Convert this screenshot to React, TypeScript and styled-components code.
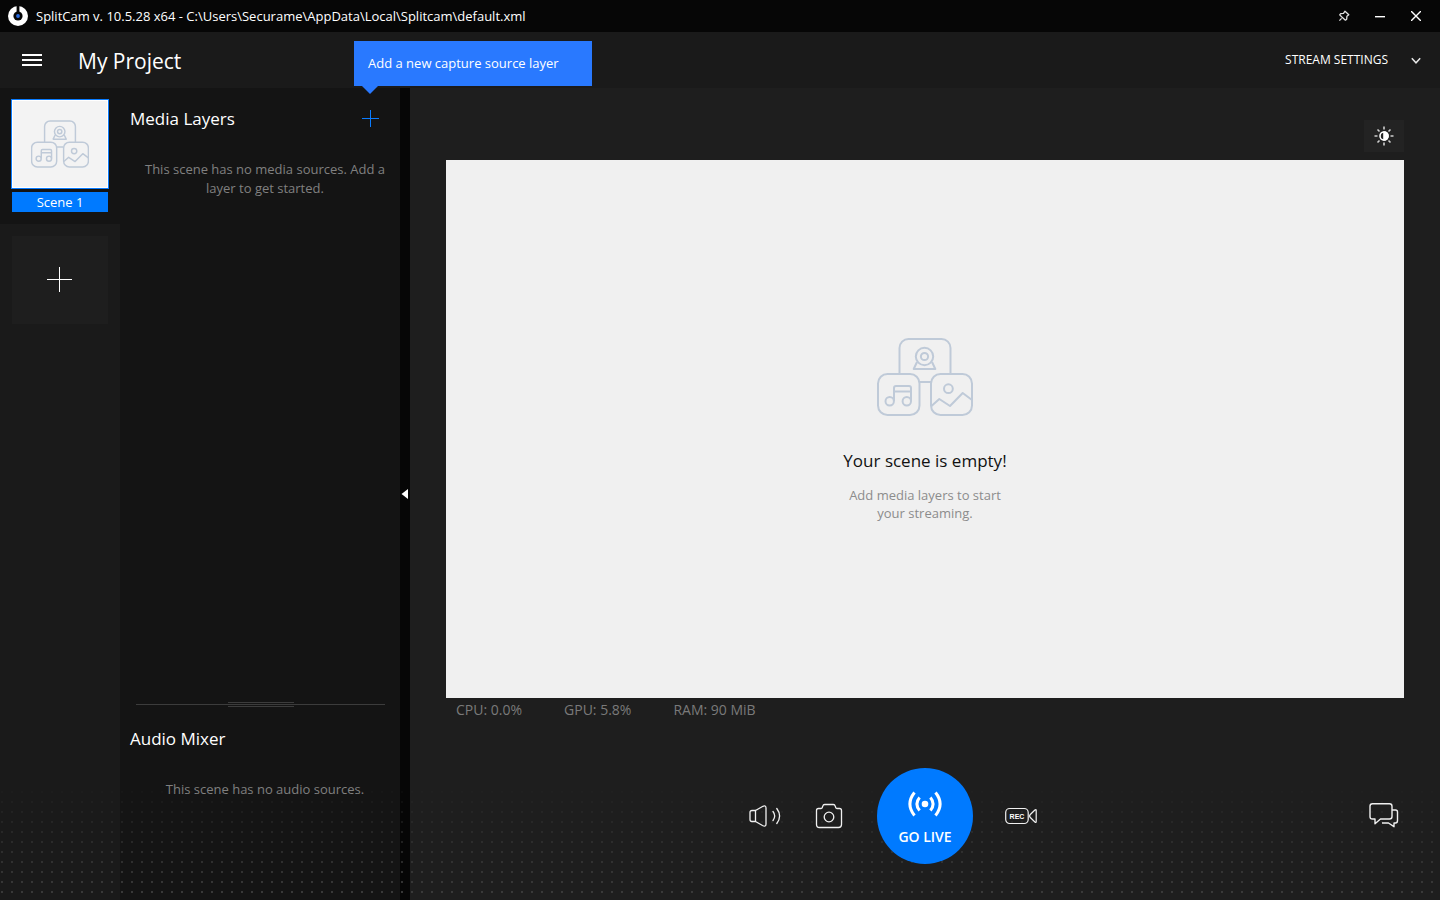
import React from "react";
import styled, { createGlobalStyle } from "styled-components";

const GlobalStyle = createGlobalStyle`
  *, *::before, *::after { box-sizing: border-box; }
  body {
    margin: 0;
    background: #1e1e1e;
    color: #ffffff;
    font-family: "Open Sans", "Noto Sans", sans-serif;
    font-size: 14px;
  }
  h1, h2, h3, p { margin: 0; font-weight: 400; }
  button {
    display: inline-flex;
    align-items: center;
    justify-content: center;
    padding: 0;
    border: 0;
    background: transparent;
    color: inherit;
    font: inherit;
    cursor: pointer;
  }
  svg { display: block; flex: none; }
`;

const Window = styled.div`
  position: relative;
  display: flex;
  flex-direction: column;
  min-height: 100vh;
`;

const DotField = styled.div`
  position: absolute;
  z-index: 1;
  left: 0;
  right: 0;
  bottom: 0;
  height: 120px;
  pointer-events: none;
  background-image: radial-gradient(circle at 2px 2px, #3c3c3c 1px, transparent 1px);
  background-size: 10px 10px;
  mask-image: linear-gradient(to bottom, transparent, #000000);
`;

const TitleBar = styled.header`
  display: flex;
  align-items: center;
  gap: 8px;
  height: 32px;
  padding: 0 6px 0 8px;
  background: #060606;
`;

const WindowTitle = styled.h1`
  flex: 1;
  font-size: 13px;
  line-height: 20px;
`;

const WindowActions = styled.div`
  display: flex;
`;

const WindowButton = styled.button`
  width: 36px;
  height: 32px;
`;

const ProjectBar = styled.div`
  display: flex;
  align-items: center;
  height: 56px;
  padding: 0 12px 0 16px;
  background: #1a1a1a;
`;

const MenuButton = styled.button`
  width: 32px;
  height: 32px;
`;

const ProjectName = styled.h2`
  flex: 1;
  margin-left: 30px;
  padding-top: 2px;
  font-size: 21px;
  line-height: 28px;
`;

const StreamSettings = styled.button`
  && {
    gap: 16px;
    height: 32px;
    font-size: 12px;
    line-height: 18px;
  }
`;

const Body = styled.div`
  display: flex;
  flex: 1;
`;

const SceneRail = styled.nav`
  width: 120px;
  background: #1a1a1a;
`;

const SceneItem = styled.div`
  display: flex;
  flex-direction: column;
  align-items: center;
  gap: 3px;
  height: 136px;
  padding-top: 11px;
  background: #141414;
`;

const SceneThumb = styled.button`
  && {
    width: 98px;
    height: 90px;
    border: 1px solid #0a7cff;
    background: #f3f3f3;
    box-shadow: inset 0 0 0 1px #ffffff;
  }
`;

const SceneLabel = styled.span`
  width: 96px;
  height: 20px;
  background: #007aff;
  font-size: 13px;
  line-height: 20px;
  text-align: center;
`;

const AddScene = styled.button`
  && {
    display: flex;
    width: 96px;
    height: 88px;
    margin: 12px auto 0;
    padding: 0 2px 2px 0;
    background: #1e1e1e;
  }
`;

const SidePanel = styled.aside`
  display: flex;
  flex-direction: column;
  width: 280px;
  background: #141414;
`;

const PanelSection = styled.section<{ $grow?: boolean }>`
  flex: ${(p) => (p.$grow ? "1" : "0 0 192px")};
`;

const PanelHeader = styled.div`
  display: flex;
  align-items: center;
  justify-content: space-between;
  height: 60px;
  padding: 0 14px 0 10px;
`;

const PanelTitle = styled.h3`
  padding-top: 2px;
  font-size: 17px;
  line-height: 24px;
`;

const PanelMessage = styled.p`
  padding: 12px 10px 0 20px;
  color: #808080;
  font-size: 13px;
  line-height: 19px;
  text-align: center;
`;

const Anchor = styled.div`
  position: relative;
  z-index: 3;
`;

const AddLayerButton = styled.button`
  width: 32px;
  height: 32px;
`;

const Tooltip = styled.div`
  position: absolute;
  left: 0;
  bottom: 48px;
  width: 238px;
  padding: 12px 14px 13px;
  background: #2979ff;
  font-size: 13px;
  line-height: 20px;
  white-space: nowrap;

  &::after {
    content: "";
    position: absolute;
    top: 100%;
    left: 8px;
    border: 8px solid transparent;
    border-top-color: #2979ff;
    border-bottom-width: 0;
  }
`;

const Divider = styled.div`
  display: grid;
  align-items: center;
  height: 8px;
  margin: 0 15px 0 16px;
  background: linear-gradient(#3c3c3c, #3c3c3c) center / 100% 1px no-repeat;
`;

const Grip = styled.div`
  justify-self: center;
  width: 66px;
  height: 5px;
  border: solid #3c3c3c;
  border-width: 1px 0;
`;

const Splitter = styled.button`
  && {
    width: 10px;
    background: #060606;
  }
`;

const Stage = styled.main`
  display: flex;
  flex: 1;
  flex-direction: column;
  padding: 32px 36px 36px;
`;

const StageTools = styled.div`
  display: flex;
  justify-content: flex-end;
  margin-bottom: 8px;
`;

const BrightnessButton = styled.button`
  && {
    width: 40px;
    height: 32px;
    background: #232323;
  }
`;

const Preview = styled.section`
  display: flex;
  flex: 1;
  flex-direction: column;
  align-items: center;
  justify-content: center;
  padding-top: 2px;
  background: #f0f0f0;
`;

const PreviewTitle = styled.h3`
  margin-top: 32px;
  color: #111111;
  font-size: 17px;
  line-height: 26px;
`;

const PreviewHint = styled.p`
  width: 170px;
  margin-top: 12px;
  color: #8c8c8c;
  font-size: 13px;
  line-height: 18px;
  text-align: center;
`;

const Stats = styled.div`
  display: flex;
  gap: 42px;
  padding: 0 10px;
  color: #7a7a7a;
  font-size: 14px;
  line-height: 24px;
`;

const Controls = styled.div`
  position: relative;
  z-index: 2;
  display: grid;
  grid-template-columns: 1fr auto 1fr;
  align-items: center;
  gap: 32px;
  margin-top: 46px;
`;

const ControlGroup = styled.div<{ $align: string }>`
  display: flex;
  justify-content: ${(p) => p.$align};
  gap: 32px;
`;

const ControlButton = styled.button<{ $wide?: boolean }>`
  width: ${(p) => (p.$wide ? 40 : 32)}px;
  height: 32px;
`;

const GoLive = styled.button`
  && {
    flex-direction: column;
    gap: 10px;
    width: 96px;
    height: 96px;
    padding-top: 6px;
    border-radius: 50%;
    background: #007aff;
    font-size: 14px;
    font-weight: 600;
    line-height: 20px;
  }
`;

function EmptyArt({ width, height, stroke }: { width: number; height: number; stroke: number }) {
  return (
    <svg width={width} height={height} viewBox="0 0 96 78" fill="none" stroke="#bfcad8" strokeWidth={stroke} strokeLinejoin="round" aria-hidden="true">
      <path d="M22.5 35.5V10a9 9 0 0 1 9-9h33a9 9 0 0 1 9 9v25.500M42 44h12" />
      <rect x="1" y="36" width="41.500" height="41" rx="9.500" />
      <rect x="54" y="36" width="41" height="41" rx="9.500" />
      <circle cx="47.500" cy="18.500" r="8.700" />
      <circle cx="47.500" cy="18.500" r="3.600" />
      <path d="M40 24l-3.300 7h21.600L55 24" />
      <circle cx="12.700" cy="63.300" r="4.200" />
      <circle cx="29.800" cy="63.300" r="4.200" />
      <path d="M17 63V50a2 2 0 0 1 2-2h13a2 2 0 0 1 2 2v13M17 53.500h17" />
      <circle cx="71.400" cy="50.700" r="4.400" />
      <path d="M54.500 68l7.800-7L73 68l12.700-13 9.300 7" />
    </svg>
  );
}

function Plus({ size, color }: { size: number; color: string }) {
  return (
    <svg width={size} height={size} viewBox={`0 0 ${size} ${size}`} stroke={color} aria-hidden="true">
      <path d={`M0 ${size / 2}H${size}M${size / 2} 0V${size}`} />
    </svg>
  );
}

export default function App() {
  return (
    <Window>
      <GlobalStyle />
      <TitleBar>
        <svg width="20" height="20" viewBox="0 0 20 20" aria-hidden="true">
          <circle cx="10" cy="10" r="10" fill="#fff" />
          <circle cx="10" cy="10" r="4.600" fill="#060606" />
          <path d="M8.600 0h2.800v8H8.600z" fill="#060606" />
          <circle cx="10" cy="10" r="1.900" fill="#2a6be0" />
        </svg>
        <WindowTitle>SplitCam v. 10.5.28 x64 - C:\Users\Securame\AppData\Local\Splitcam\default.xml</WindowTitle>
        <WindowActions>
          <WindowButton aria-label="Pin window">
            <svg width="12" height="12" viewBox="0 0 12 12" fill="none" stroke="#e0e0e0" strokeWidth="1.300" strokeLinejoin="round">
              <path d="M7 1.200l3.800 3.600-1.900 1.500-.2 2.900-1.300 1-1.900-1.700-1.900-1.700-1.900-1.900 1-1.300 2.800-.300zM3.600 8.400L1.400 10.600" />
            </svg>
          </WindowButton>
          <WindowButton aria-label="Minimize">
            <svg width="10" height="10" viewBox="0 0 10 10" fill="#fff"><path d="M0 5h10v1.400H0z" /></svg>
          </WindowButton>
          <WindowButton aria-label="Close">
            <svg width="10" height="10" viewBox="0 0 10 10" stroke="#fff" strokeWidth="1.400"><path d="M0 0l10 10M10 0L0 10" /></svg>
          </WindowButton>
        </WindowActions>
      </TitleBar>

      <ProjectBar>
        <MenuButton aria-label="Menu">
          <svg width="20" height="12" viewBox="0 0 20 12" fill="#fff"><path d="M0 0h20v2H0zM0 5h20v2H0zM0 10h20v2H0z" /></svg>
        </MenuButton>
        <ProjectName>My Project</ProjectName>
        <StreamSettings>
          STREAM SETTINGS
          <svg width="24" height="24" viewBox="0 0 24 24" fill="none" stroke="#e6e6e6" strokeWidth="1.500"><path d="M7.800 10.200l4.200 4.600 4.200-4.600" /></svg>
        </StreamSettings>
      </ProjectBar>

      <Body>
        <SceneRail aria-label="Scenes">
          <SceneItem>
            <SceneThumb aria-label="Open Scene 1"><EmptyArt width={58} height={48} stroke={2.4} /></SceneThumb>
            <SceneLabel>Scene 1</SceneLabel>
          </SceneItem>
          <AddScene aria-label="Add scene"><Plus size={25} color="#ffffff" /></AddScene>
        </SceneRail>

        <SidePanel>
          <PanelSection $grow>
            <PanelHeader>
              <PanelTitle>Media Layers</PanelTitle>
              <Anchor>
                <AddLayerButton aria-label="Add layer"><Plus size={17} color="#0a7cff" /></AddLayerButton>
                <Tooltip role="tooltip">Add a new capture source layer</Tooltip>
              </Anchor>
            </PanelHeader>
            <PanelMessage>This scene has no media sources. Add a layer to get started.</PanelMessage>
          </PanelSection>
          <Divider><Grip /></Divider>
          <PanelSection>
            <PanelHeader><PanelTitle>Audio Mixer</PanelTitle></PanelHeader>
            <PanelMessage>This scene has no audio sources.</PanelMessage>
          </PanelSection>
        </SidePanel>

        <Splitter aria-label="Collapse panel">
          <svg width="8" height="10" viewBox="0 0 8 10" fill="#fff"><path d="M7 0v10L.5 5z" /></svg>
        </Splitter>

        <Stage>
          <StageTools>
            <BrightnessButton aria-label="Brightness">
              <svg width="20" height="20" viewBox="0 0 20 20" fill="none" stroke="#fff" strokeWidth="1.600">
                <circle cx="10" cy="10" r="4" />
                <path d="M10 6a4 4 0 0 1 0 8z" fill="#fff" />
                <path stroke="#d0d0d0" d="M10 .5v3M10 16.500v3M.5 10h3M16.500 10h3M3.500 3.500l2 2M14.500 14.500l2 2M16.500 3.500l-2 2M5.500 14.500l-2 2" />
              </svg>
            </BrightnessButton>
          </StageTools>
          <Preview>
            <EmptyArt width={96} height={78} stroke={2} />
            <PreviewTitle>Your scene is empty!</PreviewTitle>
            <PreviewHint>Add media layers to start your streaming.</PreviewHint>
          </Preview>
          <Stats>
            <span>CPU: 0.0%</span>
            <span>GPU: 5.8%</span>
            <span>RAM: 90 MiB</span>
          </Stats>
          <Controls>
            <ControlGroup $align="flex-end">
              <ControlButton aria-label="Volume">
                <svg width="32" height="32" viewBox="0 0 32 32" fill="none" stroke="#f0f0f0" strokeWidth="1.300" strokeLinejoin="round" strokeLinecap="round">
                  <path d="M6.500 10.500H3Q1 10.500 1 12.500v7q0 2 2 2h3.500zM6.500 10.500l7-4q3.500-1.800 3.500 1.500v16q0 3.300-3.500 1.500l-7-4" />
                  <path d="M24 11.500q3.400 4.500 0 9M27.800 8.500q5.600 7.500 0 15" />
                </svg>
              </ControlButton>
              <ControlButton aria-label="Snapshot">
                <svg width="32" height="32" viewBox="0 0 32 32" fill="none" stroke="#f0f0f0" strokeWidth="1.300" strokeLinejoin="round">
                  <path d="M5.500 8.500H8q1 0 1.300-1l.5-1.500q.4-1.500 1.900-1.500h8.600q1.500 0 1.900 1.500l.5 1.500q.3 1 1.300 1h2.500q2 0 2 2v14q0 3-3 3h-19q-3 0-3-3v-14q0-2 2-2z" />
                  <circle cx="16" cy="17" r="4.800" />
                </svg>
              </ControlButton>
            </ControlGroup>
            <GoLive>
              <svg width="36" height="26" viewBox="0 0 36 26" fill="none" stroke="#fff" strokeWidth="3">
                <circle cx="18" cy="13" r="3.300" fill="#fff" stroke="none" />
                <path d="M7.500 1.500q-9.200 11.500 0 23M28.500 1.500q9.200 11.500 0 23M12.600 6.500q-5.400 6.500 0 13M23.400 6.500q5.400 6.500 0 13" />
              </svg>
              GO LIVE
            </GoLive>
            <ControlGroup $align="space-between">
              <ControlButton aria-label="Record">
                <svg width="32" height="32" viewBox="0 0 32 32" fill="none" stroke="#f0f0f0" strokeWidth="1.200" strokeLinejoin="round">
                  <rect x=".700" y="8.500" width="22.500" height="15" rx="4" />
                  <path d="M31.200 10.500v11q0 1.500-1.300.500l-4.600-4.500q-1.500-1.500 0-3l4.600-4.500q1.300-1 1.300.500z" />
                  <text x="12" y="18.600" textAnchor="middle" fill="#fff" stroke="none" fontFamily="Liberation Sans, sans-serif" fontSize="7" fontWeight="700">REC</text>
                </svg>
              </ControlButton>
              <ControlButton $wide aria-label="Chat">
                <svg width="32" height="32" viewBox="0 0 32 32" fill="none" stroke="#f0f0f0" strokeWidth="1.400" strokeLinejoin="round">
                  <path d="M4.500 3.700h17q2.500 0 2.500 2.500v10.300q0 2.500-2.500 2.500h-9L7 23.700V19H4.500Q2 19 2 16.500V6.200q0-2.500 2.500-2.500z" />
                  <path d="M24 10h3.500q2 0 2 2v8.500q0 2.500-2 2.500H26v3.700L20.500 23H14" />
                </svg>
              </ControlButton>
            </ControlGroup>
          </Controls>
        </Stage>
      </Body>
      <DotField />
    </Window>
  );
}
